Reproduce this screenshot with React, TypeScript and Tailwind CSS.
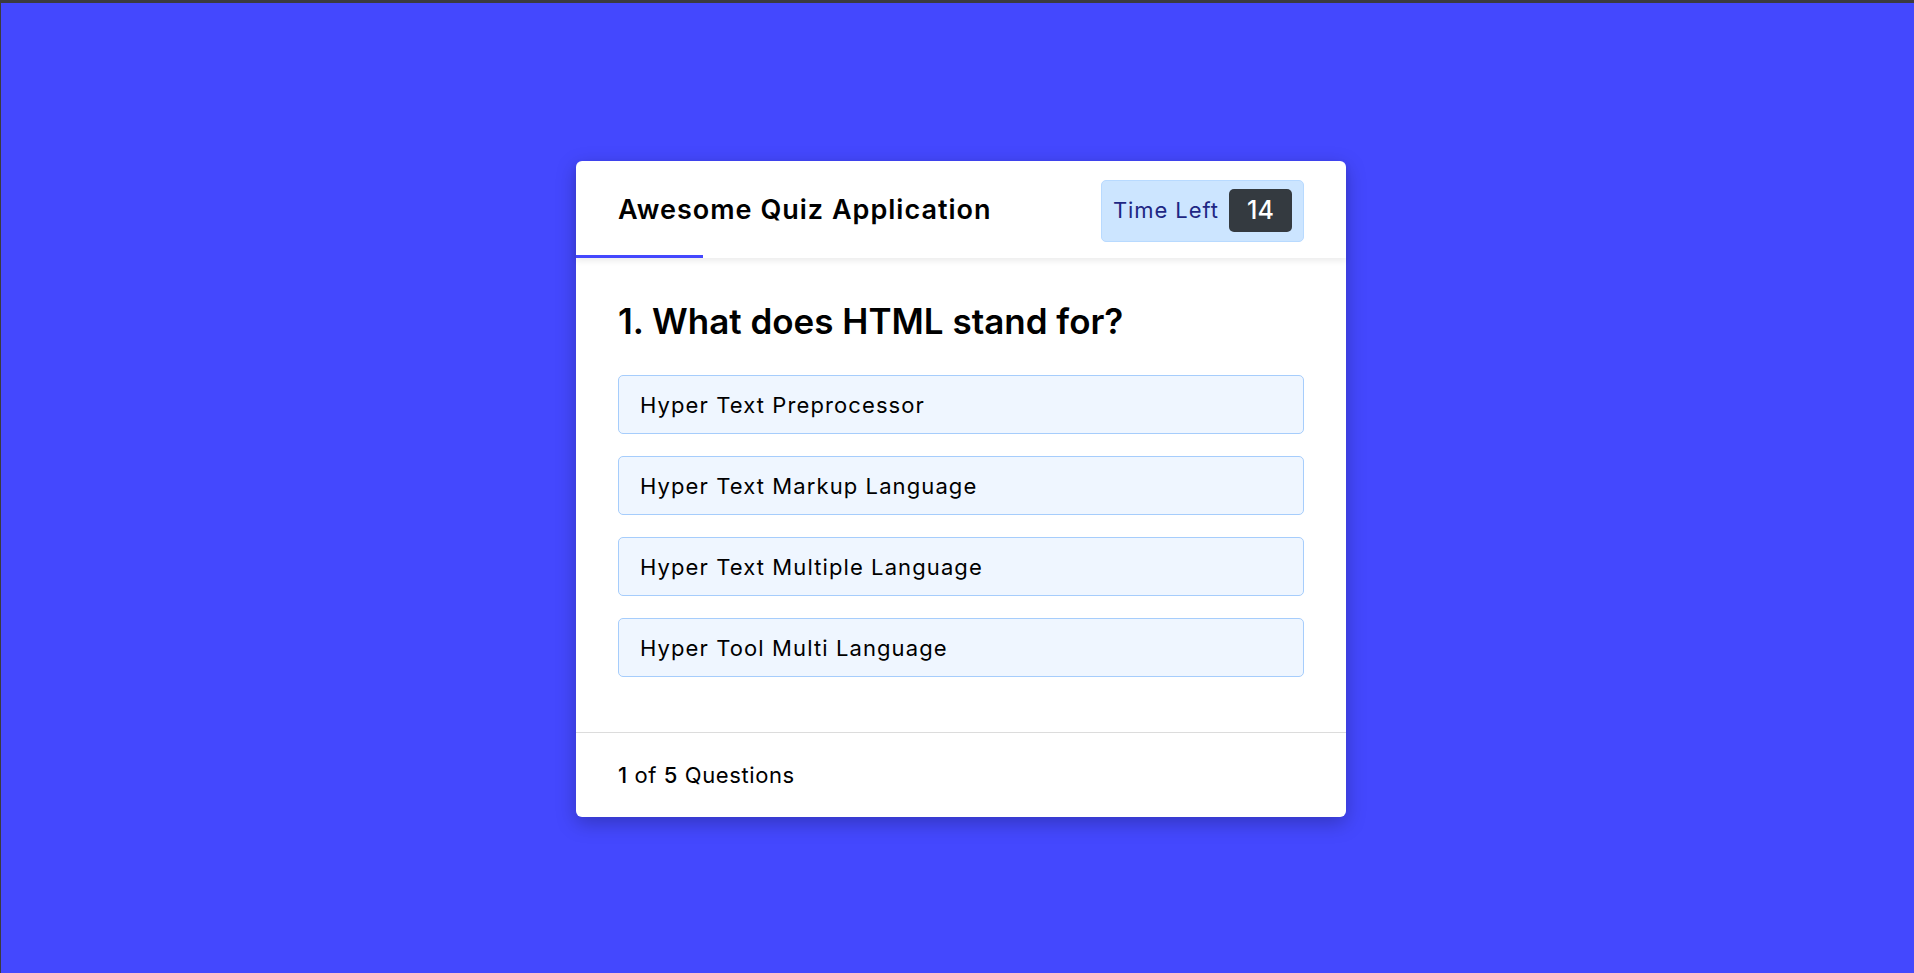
import { useState } from 'react';

const OPTIONS = [
  'Hyper Text Preprocessor',
  'Hyper Text Markup Language',
  'Hyper Text Multiple Language',
  'Hyper Tool Multi Language',
];

export default function App() {
  const [selected, setSelected] = useState<number | null>(null);

  return (
    <div
      className="min-h-screen w-full bg-[#4448fe] border-t-[3px] border-t-[#3b3b3f] border-l border-l-[#3b3b3f] pl-[7px] flex justify-center"
      style={{ fontFamily: 'Inter, "Open Sans", sans-serif' }}
    >
      <div className="mt-[158px] w-[770px] h-[656px] bg-white rounded-[6px] shadow-[0_6px_20px_rgba(0,0,0,0.25)] flex flex-col">
        {/* Header */}
        <div className="relative h-[97px] px-[42px] pt-[2px] flex items-center justify-between shadow-[0_3px_6px_rgba(0,0,0,0.08)] z-10">
          <span className="text-[27px] font-semibold text-black tracking-[1px]">Awesome Quiz Application</span>
          <div className="w-[203px] h-[62px] rounded-[5px] bg-[#cce5ff] border border-[#b8daff] flex items-center justify-between pl-[11px] pr-[11px]">
            <span className="text-[22px] text-[#1e2784] tracking-[0.9px]">Time Left</span>
            <span className="w-[63px] h-[43px] rounded-[5px] bg-[#343a40] text-white text-[25px] font-medium flex items-center justify-center">14</span>
          </div>
          <div className="absolute left-0 bottom-0 h-[3px] w-[127px] bg-[#4448fe]" />
        </div>

        {/* Body */}
        <div className="flex-1 px-[42px] pt-[39px]">
          <h2 className="text-[35px] leading-[48px] font-semibold text-black">1. What does HTML stand for?</h2>
          <div className="mt-[30px] flex flex-col gap-[22px]">
            {OPTIONS.map((opt, i) => (
              <div
                key={opt}
                onClick={() => setSelected(i)}
                className={`h-[59px] rounded-[5px] border px-[21px] pt-[1px] flex items-center text-[22px] tracking-[1.1px] text-black cursor-pointer ${selected === i ? 'bg-[#cce5ff] border-[#7fb8ff]' : 'bg-[#eff6ff] border-[#a6cdfc]'}`}
              >
                {opt}
              </div>
            ))}
          </div>
        </div>

        {/* Footer */}
        <div className="h-[85px] border-t border-[#dcdcdc] px-[42px] flex items-center text-[22px] tracking-[0.6px] text-black">
          <span>
            <span className="font-medium">1</span> of <span className="font-medium">5</span> Questions
          </span>
        </div>
      </div>
    </div>
  );
}
